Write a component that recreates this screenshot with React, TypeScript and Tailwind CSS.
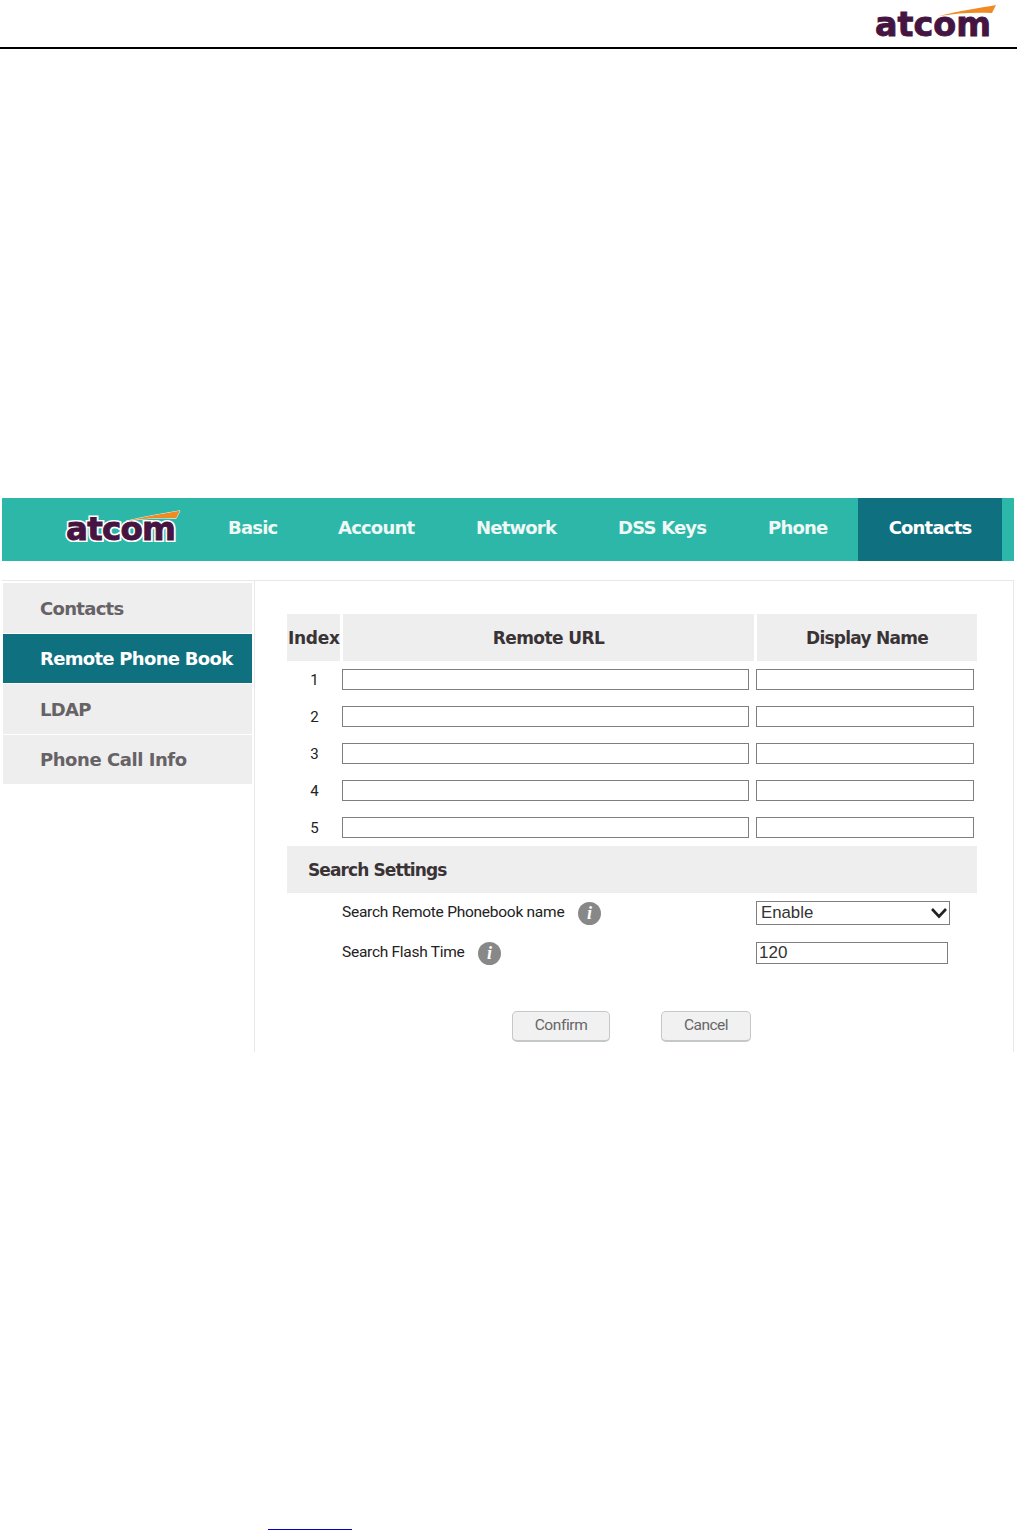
import React from "react";

const heading = { fontFamily: '"DejaVu Sans", sans-serif' };
const body = { fontFamily: 'Roboto, sans-serif' };
const arial = { fontFamily: '"Liberation Sans", sans-serif' };

function Logo({ width, outlined }: { width: number; outlined?: boolean }) {
  return (
    <svg width={width} height={(width * 40) / 120} viewBox="0 0 120 40" className="block overflow-visible">
      {outlined ? (
        <text x="0" y="33.5" textLength="116" lengthAdjust="spacingAndGlyphs" fontFamily="DejaVu Sans, sans-serif" fontWeight="700" fontSize="34" fill="#fff" stroke="#fff" strokeWidth="4.5">
          atcom
        </text>
      ) : null}
      <path d="M64 14 C 84 9, 104 6, 121 3 L 117 11 C 100 10, 82 11, 64 14 Z" fill="#f08a24" stroke={outlined ? "#fff" : "none"} strokeWidth={outlined ? 1 : 0} paintOrder="stroke" />
      <text x="0" y="33.5" textLength="116" lengthAdjust="spacingAndGlyphs" fontFamily="DejaVu Sans, sans-serif" fontWeight="700" fontSize="34" fill="#451440" stroke="#451440" strokeWidth="0.9">
        atcom
      </text>
    </svg>
  );
}

function Info() {
  return (
    <span className="flex h-[23px] w-[23px] items-center justify-center rounded-full bg-[#888888] text-[18px] font-bold italic leading-none text-white" style={{ fontFamily: '"Liberation Serif", serif' }}>
      i
    </span>
  );
}

const navItems: [string, string][] = [
  ["Basic", "w-[110px]"],
  ["Account", "w-[138px]"],
  ["Network", "w-[142px]"],
  ["DSS Keys", "w-[150px]"],
  ["Phone", "w-[120px]"],
];

const cell = "h-[21px] border border-[#7f7f7f] bg-white";

export default function App() {
  return (
    <div className="flex h-[1530px] w-[1017px] flex-col overflow-hidden bg-white">
      <header className="flex h-[49px] shrink-0 items-start justify-end border-b-2 border-black pr-[22px] pt-[2px]">
        <Logo width={120} />
      </header>

      <nav className="ml-[2px] mt-[449px] flex h-[63px] w-[1012px] shrink-0 items-stretch bg-[#2db7a8] text-[18px] font-bold tracking-[-0.8px] text-[#eef8f6]" style={heading}>
        <div className="w-[196px] pl-[64px] pt-[10px]">
          <Logo width={113} outlined />
        </div>
        {navItems.map(([label, w]) => (
          <div key={label} className={`flex items-center pb-[5px] pl-[30px] ${w}`}>
            {label}
          </div>
        ))}
        <div className="flex w-[144px] items-center justify-center bg-[#0f7080] pb-[5px] text-white">Contacts</div>
      </nav>

      <main className="ml-[2px] mt-[19px] flex h-[472px] w-[1012px] shrink-0 border-r border-t border-[#e8e8e8]">
        <aside className="flex w-[253px] shrink-0 flex-col gap-px border-r border-[#e8e8e8] pl-px pr-[2px] pt-[2px] text-[18px] font-bold tracking-[-0.7px] text-[#666266]" style={heading}>
          <div className="flex h-[50px] items-center bg-[#eeeeee] pl-[37px]">Contacts</div>
          <div className="flex h-[49px] items-center bg-[#0f7080] pl-[37px] text-white">Remote Phone Book</div>
          <div className="flex h-[50px] items-center bg-[#eeeeee] pl-[37px]">LDAP</div>
          <div className="flex h-[49px] items-center bg-[#eeeeee] pl-[37px] tracking-[-0.45px]">Phone Call Info</div>
        </aside>

        <section className="flex-1 pl-[32px] pt-[33px]">
          <div className="grid w-[690px] grid-cols-[53px_411px_220px] gap-x-[3px] text-[17px] font-bold text-[#3a3336]" style={heading}>
            <div className="flex h-[47px] items-center bg-[#eeeeee] pl-px pt-[2px] tracking-[-0.3px]">Index</div>
            <div className="flex h-[47px] items-center justify-center bg-[#eeeeee] pt-[2px] tracking-[-0.6px]">Remote URL</div>
            <div className="flex h-[47px] items-center justify-center bg-[#eeeeee] pt-[2px] tracking-[-0.75px]">Display Name</div>
          </div>

          <div className="mt-[8px] flex w-[690px] flex-col gap-[16px]">
            {[1, 2, 3, 4, 5].map((n) => (
              <div key={n} className="grid h-[21px] grid-cols-[55px_414px_218px] items-center text-[15px] text-[#222222]" style={body}>
                <div className="text-center leading-[20px]">{n}</div>
                <div className={`${cell} w-[407px]`} />
                <div className={cell} />
              </div>
            ))}
          </div>

          <div className="mt-[8px] flex h-[47px] w-[690px] items-center bg-[#eeeeee] pl-[21px] pt-[2px] text-[17px] font-bold tracking-[-0.9px] text-[#3a3336]" style={heading}>
            Search Settings
          </div>

          <div className="mt-[8px] flex h-[24px] w-[690px] items-center pl-[55px] text-[15.5px] text-[#222222]" style={body}>
            <span className="-mt-px w-[222px] whitespace-nowrap tracking-[-0.26px]">Search Remote Phonebook name</span>
            <span className="ml-[14px]"><Info /></span>
            <div className="ml-[155px] flex h-[24px] w-[194px] items-center justify-between border border-[#7f7f7f] bg-white pl-[4px] pr-[1px] text-[16.8px] text-[#333333]" style={arial}>
              Enable
              <svg width="18" height="12" viewBox="0 0 18 12" fill="none" stroke="#222222" strokeWidth="2.6">
                <path d="M2 2 L9 9.5 L16 2" />
              </svg>
            </div>
          </div>

          <div className="mt-[17px] flex h-[22px] w-[690px] items-center pl-[55px] text-[15.5px] text-[#222222]" style={body}>
            <span className="-mt-px w-[124px] whitespace-nowrap tracking-[-0.27px]">Search Flash Time</span>
            <span className="ml-[12px]"><Info /></span>
            <div className="ml-[255px] flex h-[22px] w-[192px] items-center border border-[#7f7f7f] bg-white pl-[2px] text-[17px] text-[#333333]" style={arial}>
              120
            </div>
          </div>

          <div className="mt-[47px] flex w-[690px] pl-[225px] text-[15.5px] text-[#666666]" style={body}>
            <div className="flex h-[31px] w-[98px] items-center justify-center rounded-[5px] border border-b-2 border-[#c4c8c8] bg-[#f1f1f1] tracking-[-0.4px]">Confirm</div>
            <div className="ml-[51px] flex h-[31px] w-[90px] items-center justify-center rounded-[5px] border border-b-2 border-[#c4c8c8] bg-[#f1f1f1] tracking-[-0.5px]">Cancel</div>
          </div>
        </section>
      </main>

      <div className="ml-[268px] mt-auto h-px w-[84px] shrink-0 bg-[#0000c8]" />
    </div>
  );
}
